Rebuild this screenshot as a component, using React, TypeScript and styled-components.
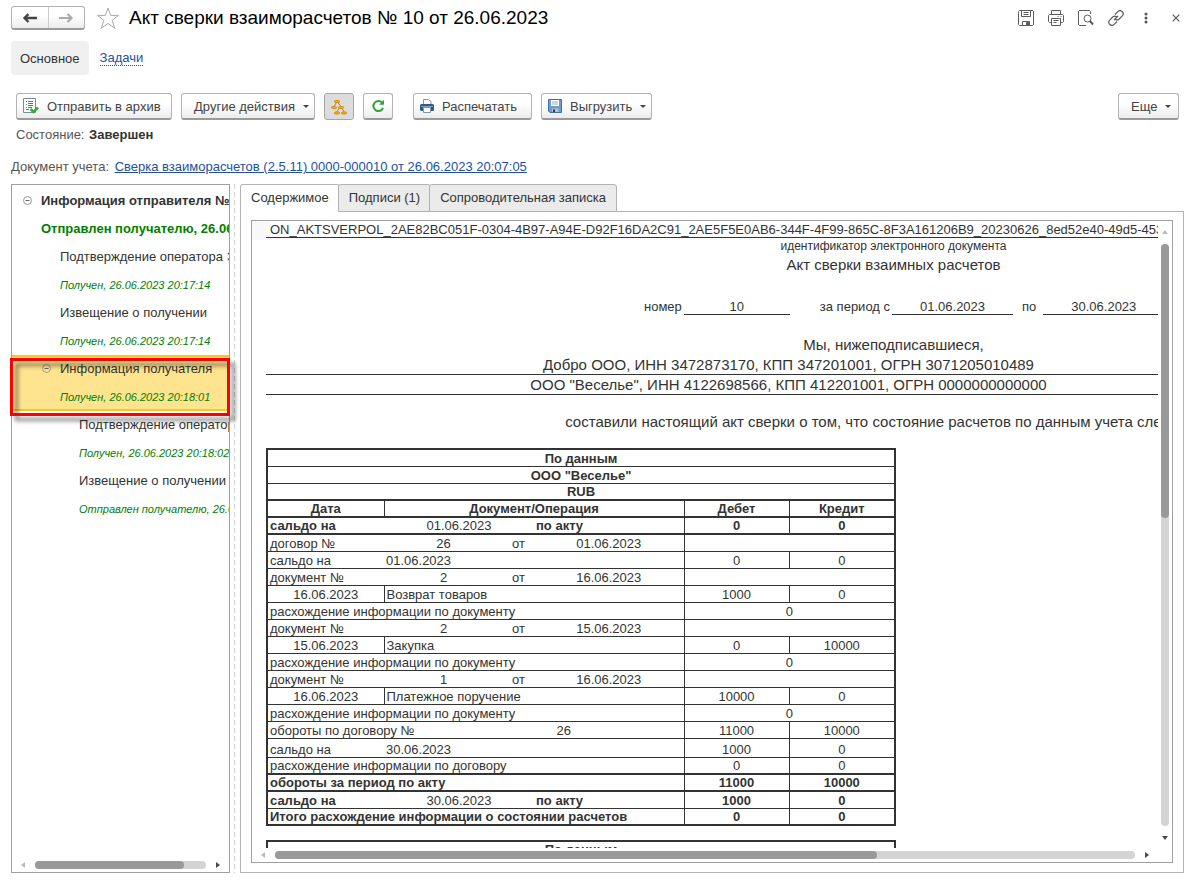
import React from "react";
import styled, { createGlobalStyle, css } from "styled-components";

const GlobalStyle = createGlobalStyle`
  *, *::before, *::after { box-sizing: border-box; }
  body { margin: 0; background: #fff; }
  body, button, table {
    font-family: "Liberation Sans", Arial, sans-serif;
    font-size: 13px;
    color: #333;
  }
`;

const Page = styled.main`
  display: flex;
  flex-direction: column;
  height: 100vh;
  padding: 6px 19px 12px 11px;
`;

const Header = styled.header`
  display: flex;
  align-items: center;
  height: 24px;
`;

const buttonFace = css`
  border: 1px solid #b3b3b3;
  border-bottom: 2px solid #9a9a9a;
  border-radius: 3px;
  background: linear-gradient(#fff 40%, #ececec);
`;

const HistoryButtons = styled.div`
  ${buttonFace}
  display: flex;
  width: 74px;
  height: 24px;
`;

const HistoryButton = styled.button`
  display: flex;
  flex: 1;
  align-items: center;
  justify-content: center;
  padding: 0;
  border: 0;
  background: none;
  & + & { border-left: 1px solid #ccc; }
`;

const IconButton = styled.button`
  display: flex;
  align-items: center;
  justify-content: center;
  width: 30px;
  height: 24px;
  padding: 0;
  border: 0;
  background: none;
`;

const StarButton = styled(IconButton)`
  width: 24px;
  margin: 0 9px 0 11px;
`;

const Title = styled.h1`
  flex: 1;
  margin: 0;
  font-size: 19px;
  font-weight: 400;
  line-height: 24px;
  color: #000;
`;

const WindowTools = styled.div`
  display: flex;
  margin-right: -7px;
`;

const SectionNav = styled.nav`
  display: flex;
  align-items: center;
  gap: 11px;
  margin-top: 11px;
`;

const SectionCurrent = styled.button`
  height: 34px;
  padding: 0 9px;
  border: 0;
  border-radius: 4px;
  background: #f0f0f0;
`;

const SectionLink = styled.a`
  color: #1d4fa8;
  line-height: 15px;
  text-decoration: none;
  border-bottom: 1px dotted #1d4fa8;
`;

const Toolbar = styled.div`
  display: flex;
  gap: 9px;
  margin: 18px 5px 0;
`;

const ToolButton = styled.button<{ $pressed?: boolean; $width?: number; $indent?: number }>`
  ${buttonFace}
  display: flex;
  align-items: center;
  justify-content: ${(p) => (p.$width ? "flex-start" : "center")};
  gap: 8px;
  width: ${(p) => p.$width ?? 30}px;
  height: 27px;
  padding: 0 0 0 ${(p) => p.$indent ?? 0}px;
  color: #444;
  white-space: nowrap;
  ${(p) => p.$pressed && css`
    border: 1px solid #a6a6a6;
    background: #dcdcdc;
  `}
`;

const ToolGroup = styled.div<{ $end?: boolean }>`
  display: flex;
  gap: 9px;
  margin-left: ${(p) => (p.$end ? "auto" : "0")};
  & + & { padding-left: 11px; }
`;

const Caret = styled.span`
  border: 3px solid transparent;
  border-top-color: #444;
  border-bottom: 0;
`;

const StateLine = styled.div`
  margin: 7px 5px 0;
  line-height: 16px;
  color: #555;
  strong { margin-left: 1px; color: #333; }
`;

const SourceLine = styled.div`
  margin-top: 16px;
  line-height: 16px;
  color: #555;
  a { margin-left: 2px; color: #1d4fa8; }
`;

const Workspace = styled.div`
  display: flex;
  flex: 1;
  min-height: 0;
  margin-top: 9px;
`;

const TreePanel = styled.aside`
  position: relative;
  display: flex;
  flex-direction: column;
  width: 219px;
  border: 1px solid #a0a0a0;
`;

const TreeList = styled.ul`
  flex: 1;
  min-height: 0;
  margin: 0;
  padding: 2px 0 0;
  overflow: hidden;
  list-style: none;
`;

const TreeNode = styled.li<{ $depth: number; $strong?: boolean; $selected?: boolean }>`
  position: relative;
  height: 56px;
  padding-left: ${(p) => 10 + p.$depth * 19}px;
  line-height: 28px;
  white-space: nowrap;
  font-weight: ${(p) => (p.$strong ? 700 : 400)};
  ${(p) => p.$selected && css`
    background: #ffe48f;
    box-shadow: inset 0 2px #fcc61f, inset 0 -2px #fcc61f;
  `}
`;

const NodeTitle = styled.div`
  height: 28px;
`;

const NodeStatus = styled.div<{ $strong?: boolean }>`
  height: 28px;
  color: #008000;
  font-size: ${(p) => (p.$strong ? 13 : 11)}px;
  font-style: ${(p) => (p.$strong ? "normal" : "italic")};
`;

const Toggle = styled.svg`
  position: absolute;
  top: 9px;
  margin-left: -18px;
`;

const Highlight = styled.div`
  position: absolute;
  top: 173px;
  left: -2px;
  right: -1px;
  height: 58px;
  border: 3px solid #f00;
  filter: drop-shadow(5px 5px 2px rgba(0, 0, 0, 0.5));
  pointer-events: none;
`;

const Splitter = styled.div`
  width: 10px;
  background: repeating-linear-gradient(#d2d2d2 0 5px, transparent 5px 8px) 4px 0 / 1px 100% no-repeat;
`;

const ContentPane = styled.section`
  display: flex;
  flex: 1;
  flex-direction: column;
  min-width: 0;
`;

const Tabs = styled.div`
  display: flex;
  height: 28px;
`;

const Tab = styled.button<{ $active?: boolean }>`
  height: 28px;
  padding: 0 10px 2px;
  border: 1px solid #b3b3b3;
  border-radius: 3px 3px 0 0;
  background: #ebebeb;
  & + & { margin-left: -2px; }
  ${(p) => p.$active && css`
    border-bottom-color: #fff;
    background: #fff;
  `}
`;

const TabPanel = styled.div`
  display: flex;
  flex: 1;
  min-height: 0;
  margin-top: -1px;
  padding: 8px 10px 9px;
  border: 1px solid #b3b3b3;
  border-top: 0;
`;

const TabsBaseline = styled.div`
  flex: 1;
  border-bottom: 1px solid #b3b3b3;
`;

const DocumentFrame = styled.div`
  display: grid;
  flex: 1;
  grid-template: minmax(0, 1fr) 14px / minmax(0, 1fr) 14px;
  min-width: 0;
  margin-top: 1px;
  border: 1px solid #a0a0a0;
`;

const DocumentView = styled.div`
  overflow: hidden;
  padding-left: 14px;
  background: linear-gradient(#f8f8f8, #f8f8f8) 0 0 / 18px 19px no-repeat;
`;

const Sheet = styled.article`
  width: 1255px;
  white-space: nowrap;
`;

const Identifier = styled.div`
  height: 17px;
  padding-left: 4px;
  border-bottom: 1px solid #333;
  line-height: 17px;
`;

const Caption = styled.div`
  font-size: 12px;
  line-height: 16px;
  text-align: center;
`;

const DocTitle = styled.h2`
  margin: 0;
  font-size: 15px;
  font-weight: 400;
  line-height: 22px;
  text-align: center;
`;

const PeriodLine = styled.div`
  display: flex;
  height: 17px;
  margin: 22px 0 20px 378px;
  line-height: 17px;
`;

const PeriodValue = styled.span<{ $width: number; $gap?: number; $lead?: number }>`
  width: ${(p) => p.$width}px;
  margin: 0 ${(p) => p.$gap ?? 0}px 0 ${(p) => p.$lead ?? 2}px;
  border-bottom: 1px solid #333;
  text-align: center;
`;

const Intro = styled.p`
  margin: 0;
  font-size: 15px;
  line-height: 20px;
  text-align: center;
`;

const PartyLine = styled.p`
  margin: 0;
  padding-right: 210px;
  border-bottom: 1px solid #333;
  font-size: 15px;
  line-height: 19px;
  text-align: center;
`;

const Statement = styled(Intro)`
  margin: 17px 0 16px;
`;

const Ledger = styled.table`
  width: 628px;
  margin-bottom: 14px;
  border: 2px solid #333;
  border-collapse: collapse;
  table-layout: fixed;
`;

const Row = styled.tr<{ $heavy?: boolean; $tall?: boolean }>`
  height: ${(p) => (p.$tall ? 19 : 17)}px;
  border-bottom: ${(p) => (p.$heavy ? 2 : 1)}px solid #333;
`;

const Cell = styled.td<{ $align?: "left" | "center"; $bold?: boolean; $line?: boolean }>`
  padding: 0 2px;
  overflow: hidden;
  line-height: 15px;
  text-align: ${(p) => p.$align ?? "center"};
  vertical-align: bottom;
  font-weight: ${(p) => (p.$bold ? 700 : 400)};
  ${(p) => p.$line && css`border-right: 1px solid #333;`}
`;

const VerticalBar = styled.div`
  display: flex;
  flex-direction: column;
  align-items: center;
  padding: 9px 0 8px;
`;

const VerticalTrack = styled.div`
  flex: 1;
  width: 8px;
  margin: 10px 0;
  border-radius: 4px;
  background: #d4d4d4;
`;

const HorizontalBar = styled.div`
  display: flex;
  align-items: center;
  height: 14px;
  padding: 0 9px;
`;

const HorizontalTrack = styled.div`
  flex: 1;
  height: 8px;
  margin: 0 10px;
  border-radius: 4px;
  background: #d4d4d4;
`;

const Thumb = styled.div<{ $width?: string; $height?: string }>`
  width: ${(p) => p.$width ?? "100%"};
  height: ${(p) => p.$height ?? "100%"};
  border-radius: 4px;
  background: #999;
`;

const Arrow = styled.svg<{ $off?: boolean }>`
  flex: none;
  fill: ${(p) => (p.$off ? "#bbb" : "#4a4a4a")};
`;

const LeftArrow = () => <Arrow $off width="4" height="6"><path d="M4 0v6L0 3z" /></Arrow>;
const RightArrow = () => <Arrow width="4" height="6"><path d="M0 0v6l4-3z" /></Arrow>;
const UpArrow = () => <Arrow $off width="6" height="4"><path d="M0 4h6L3 0z" /></Arrow>;
const DownArrow = () => <Arrow width="6" height="4"><path d="M0 0h6L3 4z" /></Arrow>;

const BackIcon = () => (
  <svg width="16" height="12" fill="none" stroke="#444" strokeWidth="2.4"><path d="M2 6h13M6.500 2L2.500 6l4 4" /></svg>
);
const ForwardIcon = () => (
  <svg width="16" height="12" fill="none" stroke="#aaa" strokeWidth="2.2"><path d="M1 6h13M9.500 2l4 4-4 4" /></svg>
);
const StarIcon = () => (
  <svg width="24" height="24" fill="none" stroke="#aaa"><path d="M12 2l2.600 7.400h7.900l-6.300 4.900 2.400 7.900L12 17.400l-6.600 4.800 2.400-7.900L1.500 9.400h7.900z" /></svg>
);
const SaveIcon = () => (
  <svg width="16" height="16" fill="none" stroke="#5c5c5c">
    <path d="M1.500.5h13l1 1v13l-1 1h-13l-1-1v-13zM3.500.5v6h9v-6M5.500 2.500h5M5.500 4.500h5M4.500 15.500v-4h7v4" />
    <path d="M8.500 12.500h2v3h-2z" fill="#5c5c5c" />
  </svg>
);
const PrintIcon = () => (
  <svg width="16" height="16" fill="none" stroke="#5c5c5c">
    <path d="M3.500 4.500v-4h9v4M3.500 12.500h-2l-1-1v-6l1-1h13l1 1v6l-1 1h-2M3.500 8.500h9v7h-9zM5.500 10.500h5M5.500 12.500h3M9.500 6.500h1M12.500 6.500h1" />
  </svg>
);
const PreviewIcon = () => (
  <svg width="16" height="16" fill="none" stroke="#5c5c5c">
    <path d="M8 15.500H1.500l-1-1v-13l1-1h10l1 1V4" /><circle cx="9.500" cy="8.500" r="3.500" /><path d="M12 11l3 3.500" strokeWidth="2" />
  </svg>
);
const LinkIcon = () => (
  <svg width="16" height="16" fill="none" stroke="#5c5c5c" strokeWidth="1.200">
    <path d="M7 4.500l2.800-2.800a2.700 2.700 0 0 1 4.500 4.200L11 9.200a2.700 2.700 0 0 1-3.500 0M9 11.500l-2.800 2.800a2.700 2.700 0 0 1-4.500-4.200L5 6.800a2.700 2.700 0 0 1 3.500 0M6 10l4-4" />
  </svg>
);
const DotsIcon = () => (
  <svg width="4" height="12" fill="#555"><circle cx="2" cy="2" r="1.500" /><circle cx="2" cy="6" r="1.500" /><circle cx="2" cy="10" r="1.500" /></svg>
);
const CloseIcon = () => (
  <svg width="8" height="8" stroke="#555" strokeWidth="1.200"><path d="M.7.7l6.600 6.600M7.300.7L.7 7.300" /></svg>
);
const ArchiveIcon = () => (
  <svg width="16" height="16" fill="none">
    <path d="M.5.5h12v14H.5z" fill="#fff" stroke="#7c8b99" />
    <path d="M3 3.500h1M3 6.500h1M3 9.500h1" stroke="#3a9a3a" />
    <path d="M5 3.500h5" stroke="#3a9a3a" /><path d="M5 5.500h5M5 9.500h4" stroke="#4a74b4" /><path d="M5 7.500h5" stroke="#d33" /><path d="M3 11.500h3" stroke="#4a74b4" />
    <path d="M7.500 11l3 3L15 9.500" stroke="#3bad3b" strokeWidth="2.500" />
  </svg>
);
const HierarchyIcon = () => (
  <svg width="16" height="16" fill="none" stroke="#8a8a8a">
    <path d="M6 2L3 8M6 2l4 6M9 8l-4 6M10 8l4 6" />
    <g fill="#ffb400" stroke="#d98a00">
      <rect x="3.500" y="1.500" width="5" height="2" rx="1" /><rect x=".5" y="7.500" width="5" height="2" rx="1" /><rect x="7.500" y="7.500" width="5" height="2" rx="1" />
      <rect x="3.500" y="13" width="5" height="2" rx="1" /><rect x="10.500" y="13" width="5" height="2" rx="1" />
    </g>
  </svg>
);
const RefreshIcon = () => (
  <svg width="14" height="14" fill="none" stroke="#2fa33a" strokeWidth="2"><path d="M11 3.500A5 5 0 1 0 12 9" /><path d="M13 .8v5H8z" fill="#2fa33a" stroke="none" /></svg>
);
const PrinterColorIcon = () => (
  <svg width="14" height="14">
    <path d="M3.500 6V.5h5l2.500 2V6" fill="#fff" stroke="#8593a3" />
    <rect y="5" width="14" height="7" rx="1.500" fill="#2f5b87" /><path d="M1 7.500h12" stroke="#7fa3c7" />
    <path d="M3.500 8.500h7v5h-7z" fill="#fff" stroke="#8593a3" />
  </svg>
);
const DisketteIcon = () => (
  <svg width="14" height="14">
    <path d="M.5.5h13v13H2l-1.500-1.500z" fill="#6f9ccc" stroke="#3f6fa3" />
    <path d="M3 1h8v6H3z" fill="#fff" /><path d="M4 3h6M4 5h6" stroke="#9ab" /><path d="M4 9.500h6.500V13H4z" fill="#b8c2c4" /><path d="M5 10.500h2V13H5z" fill="#335" />
  </svg>
);

const Collapse = () => (
  <Toggle width="9" height="9" fill="none" stroke="#999"><circle cx="4.500" cy="4.500" r="4" /><path d="M2.500 4.500h4" stroke="#666" /></Toggle>
);

type NodeData = { title: string; status: string; depth: number; open?: boolean; strong?: boolean; selected?: boolean };

const nodes: NodeData[] = [
  { title: "Информация отправителя № 10", status: "Отправлен получателю, 26.06.2023", depth: 1, open: true, strong: true },
  { title: "Подтверждение оператора ЭДО", status: "Получен, 26.06.2023 20:17:14", depth: 2 },
  { title: "Извещение о получении", status: "Получен, 26.06.2023 20:17:14", depth: 2 },
  { title: "Информация получателя", status: "Получен, 26.06.2023 20:18:01", depth: 2, open: true, selected: true },
  { title: "Подтверждение оператора ЭДО", status: "Получен, 26.06.2023 20:18:02", depth: 3 },
  { title: "Извещение о получении", status: "Отправлен получателю, 26.06.2023", depth: 3 },
];

const Reference = ({ label, number, date }: { label: string; number: string; date: string }) => (
  <Row>
    <Cell $align="left">{label}</Cell>
    <Cell colSpan={2}>{number}</Cell>
    <Cell>от</Cell>
    <Cell $line>{date}</Cell>
    <Cell colSpan={2} />
  </Row>
);

const Operation = ({ date, name, debit, credit }: { date: string; name: string; debit: string; credit: string }) => (
  <>
    <Row>
      <Cell $line>{date}</Cell>
      <Cell $line $align="left" colSpan={4}>{name}</Cell>
      <Cell $line>{debit}</Cell>
      <Cell>{credit}</Cell>
    </Row>
    <Row>
      <Cell $line $align="left" colSpan={5}>расхождение информации по документу</Cell>
      <Cell colSpan={2}>0</Cell>
    </Row>
  </>
);

const Balance = ({ date, debit, credit, tall }: { date: string; debit: string; credit: string; tall?: boolean }) => (
  <Row $tall={tall}>
    <Cell $align="left">сальдо на</Cell>
    <Cell $line $align="left" colSpan={4}>{date}</Cell>
    <Cell $line>{debit}</Cell>
    <Cell>{credit}</Cell>
  </Row>
);

const ActBalance = ({ date, debit, credit, heavy }: { date: string; debit: string; credit: string; heavy?: boolean }) => (
  <Row $heavy={heavy}>
    <Cell $bold $align="left">сальдо на</Cell>
    <Cell colSpan={3}>{date}</Cell>
    <Cell $bold $line $align="left">по акту</Cell>
    <Cell $bold $line>{debit}</Cell>
    <Cell $bold>{credit}</Cell>
  </Row>
);

const Totals = ({ label, debit, credit, bold, heavy }: { label: string; debit: string; credit: string; bold?: boolean; heavy?: boolean }) => (
  <Row $heavy={heavy}>
    <Cell $bold={bold} $line $align="left" colSpan={5}>{label}</Cell>
    <Cell $bold={bold} $line>{debit}</Cell>
    <Cell $bold={bold}>{credit}</Cell>
  </Row>
);

const Columns = () => (
  <colgroup>
    {[117, 60, 59, 31, 150, 105, 106].map((width, i) => <col key={i} width={width} />)}
  </colgroup>
);

export default function App() {
  return (
    <Page>
      <GlobalStyle />
      <Header>
        <HistoryButtons>
          <HistoryButton aria-label="Назад"><BackIcon /></HistoryButton>
          <HistoryButton aria-label="Вперед"><ForwardIcon /></HistoryButton>
        </HistoryButtons>
        <StarButton aria-label="В избранное"><StarIcon /></StarButton>
        <Title>Акт сверки взаиморасчетов № 10 от 26.06.2023</Title>
        <WindowTools>
          <IconButton aria-label="Сохранить"><SaveIcon /></IconButton>
          <IconButton aria-label="Печать"><PrintIcon /></IconButton>
          <IconButton aria-label="Просмотр"><PreviewIcon /></IconButton>
          <IconButton aria-label="Ссылка"><LinkIcon /></IconButton>
          <IconButton aria-label="Меню"><DotsIcon /></IconButton>
          <IconButton aria-label="Закрыть"><CloseIcon /></IconButton>
        </WindowTools>
      </Header>

      <SectionNav>
        <SectionCurrent>Основное</SectionCurrent>
        <SectionLink href="#tasks">Задачи</SectionLink>
      </SectionNav>

      <Toolbar>
        <ToolGroup>
          <ToolButton $width={156} $indent={6}><ArchiveIcon />Отправить в архив</ToolButton>
          <ToolButton $width={134} $indent={12}>Другие действия<Caret /></ToolButton>
          <ToolButton $pressed aria-label="Иерархия"><HierarchyIcon /></ToolButton>
          <ToolButton aria-label="Обновить"><RefreshIcon /></ToolButton>
        </ToolGroup>
        <ToolGroup>
          <ToolButton $width={119} $indent={6}><PrinterColorIcon />Распечатать</ToolButton>
          <ToolButton $width={111} $indent={6}><DisketteIcon />Выгрузить<Caret /></ToolButton>
        </ToolGroup>
        <ToolGroup $end>
          <ToolButton $width={61} $indent={12}>Еще<Caret /></ToolButton>
        </ToolGroup>
      </Toolbar>

      <StateLine>Состояние: <strong>Завершен</strong></StateLine>
      <SourceLine>
        Документ учета: <a href="#source">Сверка взаиморасчетов (2.5.11) 0000-000010 от 26.06.2023 20:07:05</a>
      </SourceLine>

      <Workspace>
        <TreePanel>
          <TreeList>
            {nodes.map((node, i) => (
              <TreeNode key={i} $depth={node.depth} $strong={node.strong} $selected={node.selected}>
                {node.open && <Collapse />}
                <NodeTitle>{node.title}</NodeTitle>
                <NodeStatus $strong={node.strong}>{node.status}</NodeStatus>
              </TreeNode>
            ))}
          </TreeList>
          <HorizontalBar>
            <LeftArrow />
            <HorizontalTrack><Thumb $width="87%" /></HorizontalTrack>
            <RightArrow />
          </HorizontalBar>
          <Highlight />
        </TreePanel>
        <Splitter />
        <ContentPane>
          <Tabs role="tablist">
            <Tab role="tab" aria-selected $active>Содержимое</Tab>
            <Tab role="tab">Подписи (1)</Tab>
            <Tab role="tab">Сопроводительная записка</Tab>
            <TabsBaseline role="presentation" />
          </Tabs>
          <TabPanel role="tabpanel">
            <DocumentFrame>
              <DocumentView>
                <Sheet>
                  <Identifier>ON_AKTSVERPOL_2AE82BC051F-0304-4B97-A94E-D92F16DA2C91_2AE5F5E0AB6-344F-4F99-865C-8F3A161206B9_20230626_8ed52e40-49d5-4531-</Identifier>
                  <Caption>идентификатор электронного документа</Caption>
                  <DocTitle>Акт сверки взаимных расчетов</DocTitle>
                  <PeriodLine>
                    номер<PeriodValue $width={106} $gap={30}>10</PeriodValue>
                    за период с<PeriodValue $width={121} $gap={9}>01.06.2023</PeriodValue>
                    по<PeriodValue $width={121} $lead={7}>30.06.2023</PeriodValue>
                  </PeriodLine>
                  <Intro>Мы, нижеподписавшиеся,</Intro>
                  <PartyLine>Добро ООО, ИНН 3472873170, КПП 347201001, ОГРН 3071205010489</PartyLine>
                  <PartyLine>ООО "Веселье", ИНН 4122698566, КПП 412201001, ОГРН 0000000000000</PartyLine>
                  <Statement>составили настоящий акт сверки о том, что состояние расчетов по данным учета следующее:</Statement>
                  <Ledger>
                    <Columns />
                    <tbody>
                      <Row><Cell $bold colSpan={7}>По данным</Cell></Row>
                      <Row><Cell $bold colSpan={7}>ООО "Веселье"</Cell></Row>
                      <Row $heavy><Cell $bold colSpan={7}>RUB</Cell></Row>
                      <Row $heavy>
                        <Cell as="th" $bold $line>Дата</Cell>
                        <Cell as="th" $bold $line colSpan={4}>Документ/Операция</Cell>
                        <Cell as="th" $bold $line>Дебет</Cell>
                        <Cell as="th" $bold>Кредит</Cell>
                      </Row>
                      <ActBalance heavy date="01.06.2023" debit="0" credit="0" />
                      <Reference label="договор №" number="26" date="01.06.2023" />
                      <Balance date="01.06.2023" debit="0" credit="0" />
                      <Reference label="документ №" number="2" date="16.06.2023" />
                      <Operation date="16.06.2023" name="Возврат товаров" debit="1000" credit="0" />
                      <Reference label="документ №" number="2" date="15.06.2023" />
                      <Operation date="15.06.2023" name="Закупка" debit="0" credit="10000" />
                      <Reference label="документ №" number="1" date="16.06.2023" />
                      <Operation date="16.06.2023" name="Платежное поручение" debit="10000" credit="0" />
                      <Row>
                        <Cell $align="left" colSpan={2}>обороты по договору №</Cell>
                        <Cell $line colSpan={3}>26</Cell>
                        <Cell $line>11000</Cell>
                        <Cell>10000</Cell>
                      </Row>
                      <Balance tall date="30.06.2023" debit="1000" credit="0" />
                      <Totals heavy label="расхождение информации по договору" debit="0" credit="0" />
                      <Totals bold heavy label="обороты за период по акту" debit="11000" credit="10000" />
                      <ActBalance date="30.06.2023" debit="1000" credit="0" />
                      <Totals bold label="Итого расхождение информации о состоянии расчетов" debit="0" credit="0" />
                    </tbody>
                  </Ledger>
                  <Ledger>
                    <Columns />
                    <tbody>
                      <Row><Cell $bold colSpan={7}>По данным</Cell></Row>
                    </tbody>
                  </Ledger>
                </Sheet>
              </DocumentView>
              <VerticalBar>
                <UpArrow />
                <VerticalTrack><Thumb $height="47%" /></VerticalTrack>
                <DownArrow />
              </VerticalBar>
              <HorizontalBar>
                <LeftArrow />
                <HorizontalTrack><Thumb $width="70%" /></HorizontalTrack>
                <RightArrow />
              </HorizontalBar>
            </DocumentFrame>
          </TabPanel>
        </ContentPane>
      </Workspace>
    </Page>
  );
}
